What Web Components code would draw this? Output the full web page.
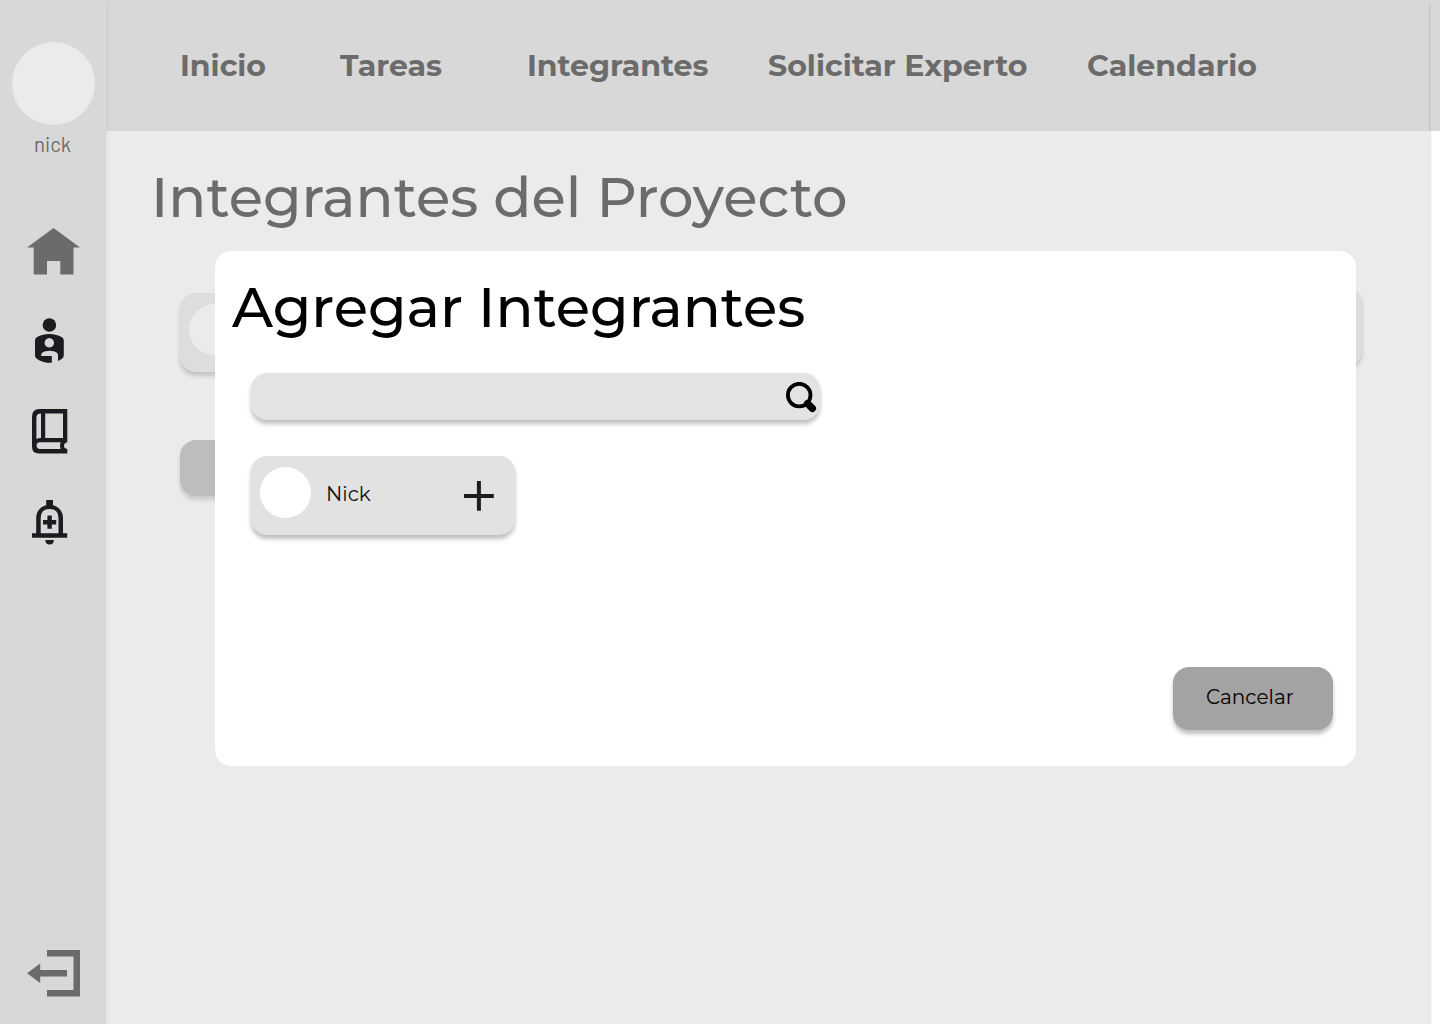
<!DOCTYPE html>
<html lang="es">
<head>
<meta charset="utf-8">
<title>Integrantes del Proyecto</title>
<style>
html,body{margin:0;height:100%;background:#fff;overflow:hidden}
body{font-family:Montserrat,Inter,"Liberation Sans",sans-serif}
</style>
</head>
<body>
<project-app></project-app>
<script>
function define(name, html, setup) {
  const template = document.createElement('template');
  template.innerHTML = html;
  customElements.define(name, class extends HTMLElement {
    connectedCallback() {
      if (this.shadowRoot) return;
      this.attachShadow({mode: 'open'}).append(template.content.cloneNode(true));
      if (setup) setup(this);
    }
  });
}

/* Label that stretches its glyphs horizontally to the requested width. */
define('wide-label', `<style>
:host{display:block;white-space:nowrap;flex:none}
span{display:inline-block;transform-origin:0 50%}
</style><span><slot></slot></span>`, el => {
  const span = el.shadowRoot.querySelector('span');
  const want = +el.getAttribute('width');
  const have = span.getBoundingClientRect().width;
  el.style.width = want + 'px';
  if (have && Math.abs(want / have - 1) > .012) span.style.transform = 'scaleX(' + want / have + ')';
});

const icons = {
  home: [53, 47, '<path fill="#6b6b6b" d="M26.5 0 53 19.5H46.5V46.5H33.3V33H20V46.5H6.7V19.5H0Z"/>'],
  person: [30, 46, '<circle cx="14.4" cy="7" r="6.8"/><path fill-rule="evenodd" d="M0 22.4Q0 20.6 1.5 19.6C7.5 14.8 21 14.8 27.3 19.6Q28.8 20.6 28.8 22.4V37.5Q28.8 39.3 27.3 40.4Q25.5 41.8 23 43V37.5Q23 34.7 19.6 33.6C15 32.2 10.5 32.8 7.2 34.8Q5.4 36.2 6.4 38.1H16.8V44.8Q7.5 45 1.5 40.4Q0 39.3 0 37.5ZM14.3 20.1a4.7 4.7 0 1 0 .01 0Z"/>'],
  book: [36, 45, '<path fill-rule="evenodd" d="M7.5 0H35.3V33.3Q32 34 32 36.7T35.3 40V44.5H7Q0 44.5 0 37.5V7.5Q0 0 7.5 0ZM9 4.6Q4.4 4.5 4.4 9V30Q6 29.1 9 29.1ZM13.2 4.6V29.1H31V4.6ZM8 33.2A3.4 3.4 0 0 0 8 40H28.6Q27.4 36.6 28.6 33.2Z"/>'],
  bell: [36, 45, '<path fill-rule="evenodd" d="M14.2 0H21V5.2C27 6.8 31 11.6 31 18V33.2H35.2V37.8H0V33.2H4.2V18C4.2 11.6 8 6.8 14.2 5.2ZM8.7 33.2H26.5V18Q26.5 9 17.6 9T8.7 18Z"/><path d="M15.4 15.6H19.8V20H24.2V24.4H19.8V28.8H15.4V24.4H11V20H15.4ZM13.2 40H22Q21.5 44.5 17.6 44.5T13.2 40Z"/>'],
  exit: [53, 47, '<path fill="#6b6b6b" d="M20 0H53V46.5H20V40H46.5V6.5H20ZM0 23.3 13.2 13.5V20H40V26.5H13.2V33Z"/>'],
  search: [31, 31, '<circle cx="13.2" cy="13.1" r="11.3" fill="none" stroke="#000" stroke-width="3.8"/><path d="M21.5 21.5 26.4 26.4" stroke="#000" stroke-width="7.2" stroke-linecap="round"/>'],
  plus: [30, 30, '<path d="M12.9 0H16.9V13H29.8V17H16.9V29.8H12.9V17H0V13H12.9Z"/>']
};
define('ui-icon', `<style>:host{display:block;flex:none}svg{display:block;fill:#1d1b20}</style>`, el => {
  const [w, h, d] = icons[el.getAttribute('name')];
  el.shadowRoot.innerHTML += `<svg width="${w}" height="${h}" viewBox="0 0 ${w} ${h}">${d}</svg>`;
});

define('side-bar', `<style>
:host{display:flex;flex-direction:column;box-sizing:border-box;width:106px;height:1024px;padding-top:42px;background:#d8d8d8;box-shadow:0 4px 4px rgba(0,0,0,.09);position:relative;z-index:1;flex:none}
.avatar{width:83px;height:83px;border-radius:50%;background:#ebebeb;margin-left:12px;flex:none}
wide-label{margin:7px 0 1px 34px;font:400 21px/24px Barlow,Rubik,"Roboto",sans-serif;color:#6b6b6b}
nav{display:flex;flex-direction:column;flex:1;padding-bottom:27.5px}
ui-icon{margin-left:31.7px}
.home{margin:71px 0 0 27px}.person{margin:43px 0 0 35px}.book{margin-top:45px}.bell{margin-top:46px}.exit{margin:auto 0 0 27px}
</style><div class="avatar"></div><wide-label width="37">nick</wide-label>
<nav><ui-icon class="home" name="home"></ui-icon><ui-icon class="person" name="person"></ui-icon><ui-icon class="book" name="book"></ui-icon><ui-icon class="bell" name="bell"></ui-icon><ui-icon class="exit" name="exit"></ui-icon></nav>`);

define('top-nav', `<style>
:host{display:flex;box-sizing:border-box;height:131px;padding:47px 0 0 74px;background:#d8d8d8;color:#6b6b6b;font-size:29.5px;line-height:36px;font-weight:700;position:relative}
i{width:1px;height:127px;margin:-43px 0 0 auto;background:#c5c5c5;box-shadow:1px 0 2px rgba(0,0,0,.07);flex:none}
b{width:10px;flex:none}
</style><wide-label width="86">Inicio</wide-label><wide-label width="102" style="margin-left:74px">Tareas</wide-label><wide-label width="181.5" style="margin-left:85px">Integrantes</wide-label><wide-label width="259.5" style="margin-left:59.5px">Solicitar Experto</wide-label><wide-label width="170" style="margin-left:59.5px">Calendario</wide-label><i></i><b></b>`);

define('project-page', `<style>
:host{display:block;box-sizing:border-box;width:1325px;height:893px;background:#ebebeb;padding:32px 0 0 45px;box-shadow:0 0 2px rgba(0,0,0,.1)}
wide-label{font-size:56px;line-height:68px;font-weight:500;color:#6b6b6b}
.row{display:flex;justify-content:space-between;align-items:flex-start;margin:56px 69px 0 29px}
.card{box-sizing:border-box;width:265px;height:79px;margin-top:6px;padding:11px 9px;border-radius:16px;background:#ddd;box-shadow:0 4px 4px rgba(0,0,0,.17)}
.card i{display:block;width:51px;height:51px;border-radius:50%;background:#ebebeb}
.card.end{margin-top:0}
.button{width:160px;height:56px;border-radius:16px;background:#bdbdbd;margin:68px 0 0 29px;box-shadow:0 4px 4px rgba(0,0,0,.14)}
</style><wide-label width="695">Integrantes del Proyecto</wide-label>
<div class="row"><div class="card"><i></i></div><div class="card end"></div></div><div class="button"></div>`);

define('search-field', `<style>
:host{display:flex;justify-content:flex-end;box-sizing:border-box;width:569px;height:47px;padding:9px 3.5px 0 0;border-radius:16px;background:#e3e3e3;box-shadow:0 4px 4px rgba(0,0,0,.25)}
</style><ui-icon name="search"></ui-icon>`);

define('member-card', `<style>
:host{display:flex;box-sizing:border-box;width:264px;height:79px;padding:11px 21px 0 9px;border-radius:16px;background:#e2e2e2;box-shadow:0 4px 4px rgba(0,0,0,.25)}
i{width:51px;height:51px;border-radius:50%;background:#fff}
wide-label{margin:14px 0 0 15px;font-size:20px;line-height:26px;color:#111}
ui-icon{margin:14px 0 0 auto}
</style><i></i><wide-label width="45"><slot></slot></wide-label><ui-icon name="plus"></ui-icon>`);

define('action-button', `<style>
:host{display:flex;justify-content:center;box-sizing:border-box;width:160px;height:63px;padding:17px 6px 0 0;border-radius:16px;background:#a3a3a3;box-shadow:0 4px 4px rgba(0,0,0,.25);font-size:20px;line-height:26px;color:#000}
</style><wide-label width="88"><slot></slot></wide-label>`);

define('member-dialog', `<style>
:host{position:absolute;z-index:2;left:215px;top:251px;display:flex;flex-direction:column;box-sizing:border-box;width:1141px;height:515px;padding:22px 23px 36px 17px;border-radius:16px;background:#fff}
.title{font-size:56px;line-height:68px;font-weight:500;color:#000}
search-field{margin:32px 0 0 19px}
member-card{margin:36px 0 0 19px}
action-button{margin:auto 0 0 auto}
</style><wide-label class="title" width="573">Agregar Integrantes</wide-label>
<search-field></search-field><member-card>Nick</member-card><action-button>Cancelar</action-button>`);

define('project-app', `<style>
:host{display:flex;position:relative;width:1440px;height:1024px;overflow:hidden}
main{flex:1}
</style><side-bar></side-bar><main><top-nav></top-nav><project-page></project-page></main><member-dialog></member-dialog>`);
</script>
</body>
</html>
